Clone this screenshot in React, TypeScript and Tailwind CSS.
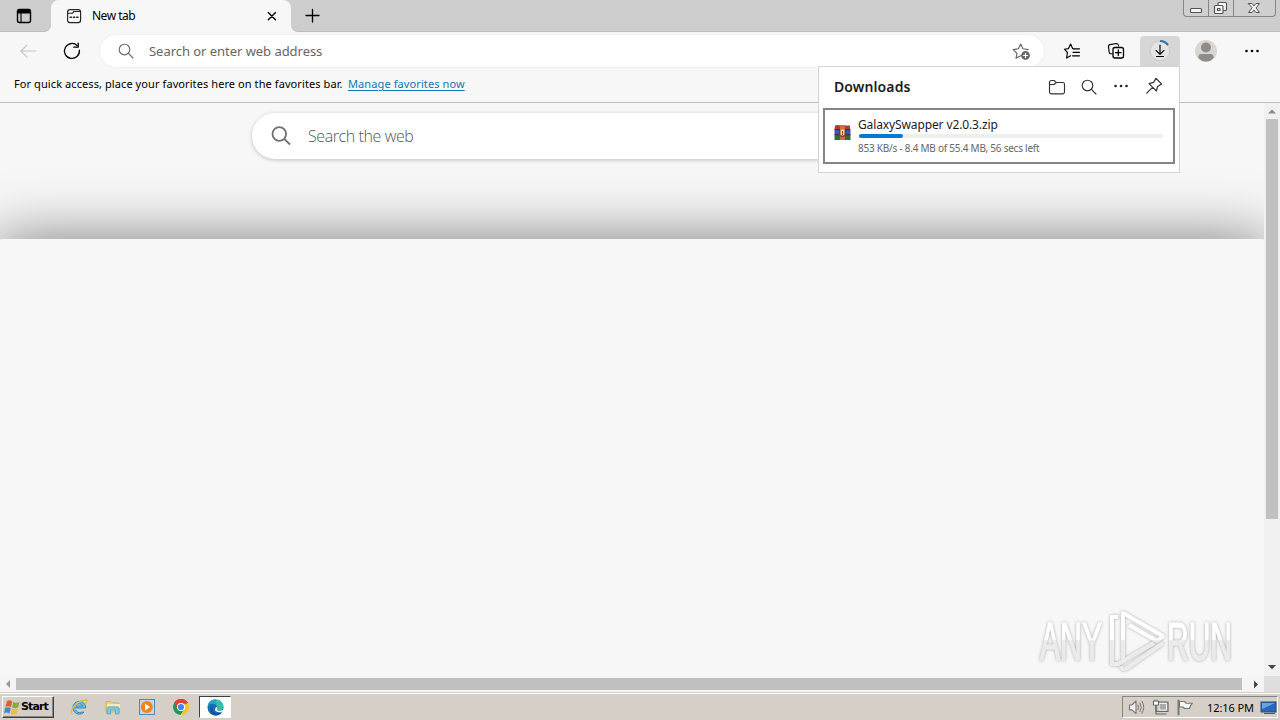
import React from "react";

type IconProps = { className?: string; children: React.ReactNode; w?: number; h?: number };

function Icon({ className = "", children, w = 20, h = 20 }: IconProps) {
  return (
    <svg
      width={w}
      height={h}
      viewBox={`0 0 ${w} ${h}`}
      fill="none"
      stroke="currentColor"
      strokeWidth="1.15"
      strokeLinecap="round"
      strokeLinejoin="round"
      className={`block shrink-0 ${className}`}
    >
      {children}
    </svg>
  );
}

function SearchGlyph({ className }: { className?: string }) {
  return (
    <Icon className={className}>
      <circle cx="8.5" cy="8.5" r="5.3" />
      <path d="M12.4 12.4L17 17" />
    </Icon>
  );
}

function Dots({ className }: { className?: string }) {
  return (
    <Icon className={className}>
      <g fill="currentColor" stroke="none">
        <circle cx="4.5" cy="10" r="1.3" />
        <circle cx="10" cy="10" r="1.3" />
        <circle cx="15.5" cy="10" r="1.3" />
      </g>
    </Icon>
  );
}

function TabStrip() {
  return (
    <div className="flex h-8 items-stretch bg-[#f7f7f7]">
      <div className="flex w-[51px] items-start rounded-br-[7px] border-b border-[#bdbdbd] bg-[#cdcdcd] pl-[14px] pt-[6px]">
        <Icon className="text-black">
          <rect x="3.5" y="3.5" width="13" height="13" rx="2" strokeWidth="1.4" />
          <path d="M4 6V4.5Q4 4 5 4H15Q16 4 16 5V7H4Z" fill="currentColor" />
          <path d="M7 7V16" />
        </Icon>
      </div>
      <div className="w-[240px] bg-[#cdcdcd] bg-[linear-gradient(#cdcdcd_50%,#f7f7f7_50%)]">
        <div className="flex h-full items-start rounded-t-[8px] bg-[#f7f7f7] pl-[13px] pt-[6px]">
          <Icon className="text-[#222]">
            <rect x="3.6" y="3.6" width="13" height="13" rx="2.4" />
            <path d="M3.6 7.2H8.5L10 5.5H16.3" />
            <path d="M6.2 11.2H7.4M9.5 11.2H10.7M12.8 11.2H14" strokeWidth="1.6" />
          </Icon>
          <span className="ml-2 mt-px w-[160px] whitespace-nowrap text-[12px] leading-[18px] tracking-[-0.5px] text-black">New tab</span>
          <Icon className="ml-[10px] text-black">
            <path d="M6.3 6.5L13.5 13.7M13.5 6.5L6.3 13.7" strokeWidth="1.4" />
          </Icon>
        </div>
      </div>
      <div className="flex flex-1 items-start rounded-bl-[7px] border-b border-[#bdbdbd] bg-[#cdcdcd] pl-[11px] pt-[6px]">
        <Icon className="text-black">
          <path d="M10.5 3.5V16M4 9.5H17" strokeWidth="1.3" />
        </Icon>
      </div>
      <div className="flex w-[97px] items-start border-b border-[#bdbdbd] bg-[#cdcdcd]">
        <div className="flex h-[17px] w-[93px] rounded-b-[4px] border border-t-0 border-[#858585] bg-[#cfcfcf] text-[#555]">
          <div className="w-[25px] border-r border-[#858585]">
            <Icon w={24} h={16}>
              <rect x="6.5" y="8.5" width="11" height="4" rx="1" fill="#f4f4f4" />
            </Icon>
          </div>
          <div className="w-[25px] border-r border-[#858585]">
            <Icon w={24} h={16}>
              <rect x="9" y="2.5" width="8.5" height="8" rx="1" fill="#f4f4f4" />
              <rect x="5.5" y="5.5" width="8.5" height="8" rx="1" fill="#f4f4f4" />
              <rect x="8.5" y="8.5" width="2.5" height="2" />
            </Icon>
          </div>
          <Icon w={41} h={16}>
            <path d="M14.5 3.5H18L20 6L22 3.5H25.5L22 8L25.5 12.5H22L20 10L18 12.5H14.5L18 8Z" fill="#f4f4f4" strokeWidth="1" />
          </Icon>
        </div>
      </div>
    </div>
  );
}

function Toolbar() {
  return (
    <div className="flex h-[36px] items-start bg-[#f7f7f7] pl-[18px] pt-[3px] text-[#1b1b1b]">
      <Icon className="mt-[6px] text-[#c6c6c6]">
        <path d="M3 10H18M9 4L3 10L9 16" />
      </Icon>
      <Icon className="ml-[24px] mt-[6px] text-black">
        <path d="M15.2 4.6A7.5 7.5 0 1 0 17.4 9.2" strokeWidth="1.3" />
        <path d="M16.2 2.2V6.2H11.8" strokeWidth="1.3" />
      </Icon>
      <div className="ml-[18px] flex h-[32px] w-[944px] items-start rounded-full bg-white pl-[16px] pr-[13px] pt-[6px] shadow-[0_0_2px_#e0e0e0]">
        <SearchGlyph className="text-[#6b6b6b]" />
        <span className="ml-[13px] flex-1 whitespace-nowrap text-[13px] leading-[20px] tracking-[-0.04px] text-[#666]">
          Search or enter web address
        </span>
        <Icon className="text-[#666]">
          <path d="M17.2 8.6L12 7.8L9.7 3L7.4 7.8L2.2 8.6L6 12.3L5 17.2L9.7 14.8" />
          <circle cx="14.5" cy="14.5" r="4.4" fill="currentColor" stroke="none" />
          <path d="M14.5 12.4V16.6M12.4 14.5H16.6" stroke="#fff" />
        </Icon>
      </div>
      <Icon className="ml-[18px] mt-[6px] text-black">
        <path d="M11.8 7.8L10.6 7.6L8.6 3L6.5 7.6L2.4 8.2L5.4 11.5L4.6 17L8.6 14.7" />
        <path d="M11.8 7.8H17.5M11 11.3H17.5M10.5 14.8H17.5" />
      </Icon>
      <Icon className="ml-[24px] mt-[6px] text-black">
        <path d="M6.2 12.7L4.5 12.8Q3.4 12.6 3.2 11.5L2.5 5.2Q2.5 4 3.8 3.6L10.5 2.5Q12 2.5 12.3 4L12.5 5" />
        <rect x="7" y="6.5" width="10.5" height="10.5" rx="2" strokeWidth="1.3" />
        <path d="M12.3 9V14.5M9.5 11.7H15" strokeWidth="1.3" />
      </Icon>
      <div className="ml-[14px] mt-px flex h-[32px] w-[40px] justify-center rounded-t-[4px] bg-[#d6d6d6] text-black">
        <Icon w={24} h={30}>
          <circle cx="12" cy="15" r="9.8" fill="#e4e4e4" stroke="#cacaca" strokeWidth="1" />
          <path d="M12 5A10 10 0 0 1 20 9" stroke="#2875b8" strokeWidth="2.2" strokeLinecap="butt" />
          <path d="M12 9V18M8 14.3L12 18.3L16 14.3M8.5 20.5H15.5" />
        </Icon>
      </div>
      <Icon w={24} h={24} className="ml-[14px] mt-[4px]">
        <g stroke="none">
          <circle cx="12" cy="12" r="11" fill="#d9d6d2" />
          <circle cx="12" cy="8.5" r="5" fill="#8e8b88" />
          <path d="M4.3 18.5Q4.3 15 7 15H17Q19.7 15 19.7 18.5Q17 22.5 12 22.5T4.3 18.5Z" fill="#8e8b88" />
        </g>
      </Icon>
      <Dots className="ml-[24px] mt-[6px] text-black" />
    </div>
  );
}

function RarIcon() {
  return (
    <svg width="17" height="17" viewBox="0 0 17 17" className="mt-[14px] block shrink-0">
      <path d="M1 1.5Q3 .5 8 1.5H16V6H.5Z" fill="#b5363b" />
      <path d="M.5 6H16.5V11H.5Z" fill="#4651ad" />
      <path d="M.5 11H16.5V16H.5Z" fill="#2f6d38" />
      <path d="M.5 5.5H16.5M.5 10.8H16.5" stroke="#2a2433" strokeWidth=".8" />
      <path d="M6 1H11V16H6Z" fill="#cf6f2e" />
      <path d="M5 6H12V12L8.5 13L5 12Z" fill="#7a3424" />
      <rect x="6.5" y="5.5" width="4" height="6" rx="1" fill="#f3dcab" />
      <path d="M8 7H9V11H8Z" fill="#a34226" />
    </svg>
  );
}

function DownloadsPopup() {
  return (
    <div className="absolute left-[818px] top-[66px] h-[107px] w-[362px] border border-[#d4d4d4] bg-white px-1">
      <div className="flex h-[41px] items-start pl-[11px] pt-[10px] text-[#333]">
        <span className="w-[213px] whitespace-nowrap text-[14px] font-semibold leading-[20px] tracking-[0.1px] text-[#1c1c1c]">
          Downloads
        </span>
        <Icon>
          <path d="M2.5 5.5Q2.5 3.5 4.5 3.5H7L9.2 5.5H15.8Q17.5 5.5 17.5 7.3V15Q17.5 16.8 15.7 16.8H4.3Q2.5 16.8 2.5 15ZM2.5 7.5H7L9.2 5.5" />
        </Icon>
        <SearchGlyph className="ml-[12px]" />
        <Dots className="-mt-px ml-[12px] text-[#222]" />
        <Icon className="-mt-px ml-[13px]">
          <path d="M12 2.4L17.6 8L13.6 10.5L12.4 15L5 7.6L9.6 6.4ZM8.6 11.3L2.7 17.2" />
        </Icon>
      </div>
      <div className="flex h-[56px] items-start border-2 border-[#858585] pl-[9px]">
        <RarIcon />
        <div className="ml-[7px] w-[305px] pt-[6px]">
          <div className="whitespace-nowrap text-[12px] leading-[18px] tracking-[-0.12px] text-[#1c1c1c]">GalaxySwapper v2.0.3.zip</div>
          <div className="ml-px h-[4px] rounded-full bg-[#eee]">
            <div className="h-[4px] w-[44px] rounded-full bg-[#0078d4]" />
          </div>
          <div className="mt-[3px] whitespace-nowrap text-[10px] leading-[14px] tracking-[-0.24px] text-[#666]">
            853 KB/s - 8.4 MB of 55.4 MB, 56 secs left
          </div>
        </div>
      </div>
    </div>
  );
}

function Watermark() {
  return (
    <svg width="228" height="72" viewBox="0 0 228 72" className="absolute bottom-0 right-0">
      <defs>
        <linearGradient id="wm" x1="0" y1="0" x2="0" y2="72" gradientUnits="userSpaceOnUse">
          <stop offset=".49" stopColor="#fff" />
          <stop offset=".51" stopColor="#ebebeb" />
        </linearGradient>
        <filter id="glow" x="-10%" y="-10%" width="120%" height="125%">
          <feDropShadow dx="0" dy="0" stdDeviation="1.5" floodColor="#777" floodOpacity=".65" />
        </filter>
      </defs>
      <g filter="url(#glow)" fontFamily="'Liberation Sans Narrow','Liberation Sans',sans-serif" fontSize="54">
        <g fill="url(#wm)" stroke="url(#wm)" strokeWidth="1.2">
          <text x="4" y="56" textLength="62" lengthAdjust="spacingAndGlyphs">ANY</text>
          <text x="131" y="56" textLength="65" lengthAdjust="spacingAndGlyphs">RUN</text>
        </g>
        <g fill="none" stroke="url(#wm)" strokeWidth="4" strokeLinejoin="round">
          <path d="M82 13H76V60H82L118 39" />
          <path d="M87 55V9L127 32L121 37L93 21" />
          <path d="M127 39L91 64Q86 67 85 62" />
        </g>
      </g>
    </svg>
  );
}

function PageArea() {
  return (
    <div className="flex h-[573px]">
      <div className="relative flex w-[1264px] flex-col overflow-hidden bg-[#f7f7f7]">
        <div className="h-[136px] shrink-0 pl-[252px] pt-[10px]">
          <div className="flex h-[46px] w-[760px] items-start rounded-full bg-white pl-[18px] pt-[12px] shadow-[0_1px_4px_rgba(0,0,0,0.22)]">
            <svg width="22" height="22" viewBox="0 0 22 22" fill="none" stroke="#717171" strokeWidth="1.8" className="block shrink-0">
              <circle cx="9.3" cy="9" r="6.8" />
              <path d="M14.2 13.8L20 19.5" />
            </svg>
            <span className="ml-[16px] whitespace-nowrap font-[family-name:'Open_Sans',sans-serif] text-[16px] font-light leading-[23px] tracking-[-0.4px] text-[#555]">
              Search the web
            </span>
          </div>
        </div>
        <div className="-mx-[5px] flex-1 rounded-t-[8px] bg-[#f7f7f7] shadow-[0_0_60px_rgba(0,0,0,0.5)]" />
        <Watermark />
      </div>
      <div className="flex w-4 flex-col items-center bg-[#f0f0f0]">
        <Icon w={16} h={16}>
          <path d="M4 10.5L8 6.5L12 10.5Z" fill="#888" stroke="none" />
        </Icon>
        <div className="h-[400px] w-[12px] bg-[#c0c0c0]" />
        <Icon w={16} h={16} className="mt-auto">
          <path d="M4 5L8 9.2L12 5Z" fill="#444" stroke="none" />
        </Icon>
      </div>
    </div>
  );
}

function HorizontalScrollbar() {
  return (
    <div className="flex h-4 items-center bg-[#f4f4f4]">
      <Icon w={16} h={16}>
        <path d="M10 4L6 8L10 12Z" fill="#999" stroke="none" />
      </Icon>
      <div className="h-[12px] w-[1226px] bg-[#c0c0c0]" />
      <Icon w={22} h={16} className="-mt-px">
        <path d="M12 4.5L16 8.5L12 12.5Z" fill="#444" stroke="none" />
      </Icon>
      <div className="h-4 w-4 bg-[#dedede]" />
    </div>
  );
}

function Taskbar() {
  return (
    <div className="flex h-[28px] items-start border-t border-[#d4d0c8] bg-[#d6cfc7]">
      <div className="flex h-full w-full items-start border-t border-white pl-[2px] pt-[2px]">
        <div className="flex h-[22px] w-[52px] items-center border border-b-[#404040] border-l-white border-r-[#404040] border-t-white shadow-[inset_-1px_-1px_0_#858585]">
          <svg width="17" height="17" viewBox="0 0 17 17" className="ml-px block shrink-0">
            <path d="M3 2Q6 .5 8.3 2.5L7 8Q4 6.4 1.5 7.8Z" fill="#df612d" />
            <path d="M9.3 2.8Q12 4.6 15.6 2.7L14.2 8.4Q11 10 8 8.4Z" fill="#84ad44" />
            <path d="M1.2 8.8Q4 7.4 6.8 9L5.5 14.4Q2.8 12.6 0 14.2Z" fill="#418cc6" />
            <path d="M7.8 9.5Q10.5 11.2 14 9.4L12.6 15Q9.8 16.5 6.5 15Z" fill="#edbd3e" />
          </svg>
          <span className="font-[family-name:'DejaVu_Sans','Noto_Sans',sans-serif] text-[11px] font-bold leading-[18px] tracking-[-0.9px] text-black">Start</span>
        </div>
        <svg width="18" height="18" viewBox="0 0 18 18" className="ml-[16px] mt-[2px] block shrink-0">
          <path d="M4.2 10H15.8A6.5 6.5 0 1 0 14 14.2H11.2A3.7 3.7 0 0 1 5.8 11.8M5.8 8A3.6 3.6 0 0 1 12.5 8Z" fill="#65bce9" stroke="#2d82b8" strokeWidth=".9" />
          <path d="M2 16Q-.5 13.5 4.8 7.7T16.8 2Q18 3.2 15 6.5" fill="none" stroke="#e7bb45" strokeWidth="1.4" />
        </svg>
        <svg width="18" height="18" viewBox="0 0 18 18" className="ml-[16px] mt-[2px] block shrink-0">
          <path d="M2 3.5H7L8.5 5H15V14H2Z" fill="#ead17c" stroke="#c7a84c" strokeWidth=".7" />
          <path d="M3 6H16V10H3Z" fill="#f9edb4" />
          <path d="M3 16V10.5Q3 8.8 5 8.8H13Q15 8.8 15 10.5V16H11.5V12H6.5V16Z" fill="#85c5dd" stroke="#519bba" strokeWidth=".7" />
        </svg>
        <svg width="18" height="18" viewBox="0 0 18 18" className="ml-[16px] mt-[2px] block shrink-0">
          <rect x="1.5" y="1.5" width="15" height="15" fill="#bed9ed" stroke="#4d8bba" />
          <circle cx="8.8" cy="9" r="6" fill="#ec8422" />
          <path d="M7 5.5L12 9L7 12.5Z" fill="#fff" />
        </svg>
        <svg width="18" height="18" viewBox="0 0 18 18" className="ml-[16px] mt-[2px] block shrink-0">
          <path d="M9 9L2.1 5A8 8 0 0 1 16 5Z" fill="#db4437" />
          <path d="M9 9L2.1 5A8 8 0 0 0 8.6 17L12.5 11Z" fill="#179c58" />
          <path d="M9 9L16 5A8 8 0 0 1 8.6 17L12.5 11V5Z" fill="#f6c52c" />
          <path d="M9 5H16A8 8 0 0 0 2.1 5L5.5 11Z" fill="#db4437" />
          <circle cx="9" cy="9" r="4" fill="#fff" />
          <circle cx="9" cy="9" r="3.1" fill="#4285f4" />
        </svg>
        <div className="ml-[9px] flex h-[22px] w-[32px] items-center justify-center border border-b-white border-l-[#404040] border-r-white border-t-[#404040] bg-white">
          <svg width="17" height="17" viewBox="0 0 17 17" className="block">
            <circle cx="8.5" cy="8.5" r="8" fill="#176fb5" />
            <path d="M.6 7.4C1.3 2.7 4.4.5 8.6.5C13.4.5 16.5 4 16.5 7.4C16.5 10.4 13.8 11.8 11 11.2C9.4 10.8 10.2 9.8 10.2 8.2C10 5.7 7.8 4.3 5.3 4.4C3.2 4.5 1.5 5.5.6 7.4Z" fill="#38bdaa" />
            <path d="M.6 7.4C1.3 2.7 4.4.5 8.6.5L9.5 5.6C8.6 4.7 7 4.3 5.3 4.4C3.2 4.5 1.5 5.5.6 7.4Z" fill="#2aa0cf" />
            <path d="M6.2 7.1C5.1 8.5 5 11 6.7 12.8C9 15 12.5 14.5 14.9 13.3C13.4 15.4 11.2 16.5 8.5 16.5C5.6 16 3.7 13.8 3.7 11.2C3.7 9.3 4.7 7.8 6.2 7.1Z" fill="#125298" />
            <path d="M9.8 7.8Q10.6 9.8 9.7 10.7Q11.3 12.4 16.2 11L15.4 12.9Q11.3 14 8.6 12Q7 10 9.8 7.8Z" fill="#fff" />
          </svg>
        </div>
        <div className="ml-auto mr-[2px] flex h-[22px] w-[156px] items-start border border-b-white border-l-[#858585] border-r-white border-t-[#858585] pl-[4px] pt-px">
          <Icon w={20} h={19} className="text-[#777]">
            <path d="M2.5 7H5L9 3V15.5L5 11.8H2.5Z" fill="#f3f3f3" />
            <path d="M11 7Q12.5 9.3 11 11.7M13 5Q15.7 9.3 13 13.7M15 3.3Q18.8 9.3 15 15.3" strokeWidth="1" />
          </Icon>
          <Icon w={20} h={19} className="ml-[4px] text-[#666]">
            <path d="M7 4H17V13.5H5V8" fill="#c4c4c4" />
            <path d="M8.5 5.5H15.5V12H8.5Z" fill="#aaa" stroke="#eee" strokeWidth="1" />
            <path d="M2.5 3V7H7.5V3M4 2V4M6 2V4M5 7V16H15" />
            <path d="M3 3.8H7V6.5H3Z" fill="#fff" stroke="none" />
          </Icon>
          <Icon w={20} h={19} className="ml-[4px] text-[#777]">
            <path d="M3.5 2.5V16.5" strokeWidth="2" />
            <path d="M4.5 3.5H9.5L11 5.2H17.5L15.5 7.5L14.5 10.5H9.5L8 9H4.5Z" fill="#f5f5f5" />
          </Icon>
          <span className="ml-[12px] w-[47px] whitespace-nowrap text-[11px] leading-[20px] tracking-[-0.1px] text-black">12:16 PM</span>
          <svg width="17" height="17" viewBox="0 0 17 17" className="ml-[6px] mt-px block shrink-0">
            <rect x="1" y="3" width="15" height="10" fill="#2868bd" stroke="#254a7e" />
            <path d="M2 4H15L2 10Z" fill="#6ba4e5" />
            <path d="M4 14.5H15" stroke="#555" />
          </svg>
        </div>
      </div>
    </div>
  );
}

export default function App() {
  return (
    <div className="relative flex h-[720px] w-[1280px] flex-col overflow-hidden bg-[#f7f7f7] font-[family-name:'Noto_Sans','Open_Sans',sans-serif]">
      <TabStrip />
      <Toolbar />
      <div className="flex h-[35px] items-start border-b border-[#bdbdbd] pl-[14px] pt-[7px] text-[11px] leading-[18px]">
        <span className="w-[334px] whitespace-nowrap tracking-[0.085px] text-black">
          For quick access, place your favorites here on the favorites bar.
        </span>
        <span className="whitespace-nowrap tracking-[0.1px] text-[#0f78b8] underline underline-offset-2">Manage favorites now</span>
      </div>
      <PageArea />
      <HorizontalScrollbar />
      <Taskbar />
      <DownloadsPopup />
    </div>
  );
}
